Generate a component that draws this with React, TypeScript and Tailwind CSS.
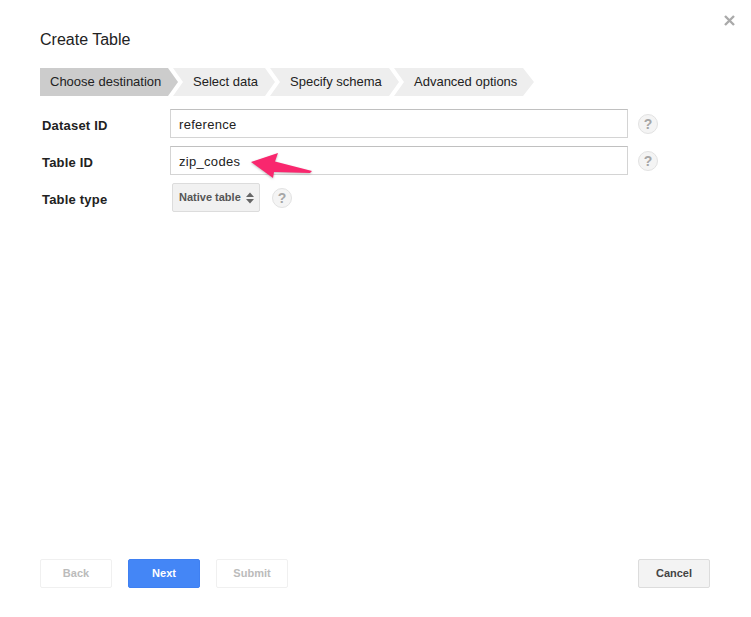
import React from 'react'

const steps = [
  { label: 'Choose destination', cls: 'w-[138px] bg-[#cccccc] pl-[10px] [clip-path:polygon(0_0,128px_0,100%_50%,128px_100%,0_100%)]' },
  { label: 'Select data', cls: 'ml-[-5px] w-[102px] bg-[#eeeeee] pl-[20px] [clip-path:polygon(0_0,92px_0,100%_50%,92px_100%,0_100%,10px_50%)]' },
  { label: 'Specify schema', cls: 'ml-[-5px] w-[129px] bg-[#eeeeee] pl-[20px] [clip-path:polygon(0_0,119px_0,100%_50%,119px_100%,0_100%,10px_50%)]' },
  { label: 'Advanced options', cls: 'ml-[-5px] w-[140px] bg-[#eeeeee] pl-[20px] [clip-path:polygon(0_0,129px_0,100%_50%,129px_100%,0_100%,10px_50%)]' },
]

function Help({ className = '' }: { className?: string }) {
  return (
    <span className={`flex h-5 w-5 shrink-0 items-center justify-center rounded-full border border-[#e2e2e2] bg-[#f4f4f4] text-[14px] font-bold leading-none text-[#a6a6a6] ${className}`}>
      ?
    </span>
  )
}

function Field({ label, value }: { label: string; value: string }) {
  return (
    <div className="flex items-center">
      <label className="w-[130px] pl-[2px] pt-1 text-[13px] font-bold tracking-[0.2px] text-[#222222]">{label}</label>
      <div className="flex h-[29px] w-[458px] items-center border border-[#d4d4d4] border-t-[#c0c0c0] bg-white pl-2 pt-[2px] text-[13px] tracking-[0.3px] text-[#222222]">
        {value}
      </div>
      <Help className="ml-[10px]" />
    </div>
  )
}

export default function App() {
  return (
    <div className="relative flex h-[617px] w-[751px] flex-col overflow-hidden bg-white px-10 font-['Liberation_Sans',Arial,sans-serif]">
      {/* Close */}
      <svg className="absolute left-[724px] top-[15px]" width="11" height="11" viewBox="0 0 11 11">
        <path d="M1 1L10 10M10 1L1 10" stroke="#aaaaaa" strokeWidth="2.4" fill="none" />
      </svg>

      <h1 className="mt-[30px] text-[16px] leading-[19px] text-[#222222]">Create Table</h1>

      {/* Wizard steps */}
      <div className="mt-[19px] flex">
        {steps.map((step) => (
          <div key={step.label} className={`flex h-[28px] items-center text-[13px] text-[#222222] ${step.cls}`}>
            {step.label}
          </div>
        ))}
      </div>

      {/* Form */}
      <div className="mt-[13px] flex flex-col gap-2">
        <Field label="Dataset ID" value="reference" />
        <Field label="Table ID" value="zip_codes" />
        <div className="flex items-center">
          <label className="w-[132px] pl-[2px] pt-1 text-[13px] font-bold tracking-[0.2px] text-[#222222]">Table type</label>
          <div className="flex h-[29px] w-[88px] items-center rounded-[2px] border border-[#dcdcdc] bg-[#f1f1f1] pl-[6px] text-[11px] font-bold text-[#555555]">
            Native table
            <svg className="ml-[5px]" width="8" height="14" viewBox="0 0 8 14">
              <path d="M4 1.5L8 6H0ZM4 12.5L0 8H8Z" fill="#666666" />
            </svg>
          </div>
          <Help className="ml-3" />
        </div>
      </div>

      {/* Annotation arrow */}
      <svg className="absolute left-[245px] top-[148px] drop-shadow-[0_1px_1px_rgba(0,0,0,0.25)]" width="72" height="34" viewBox="0 0 72 34">
        <path d="M6 14L33 5L30 13.5L67 23L65 25L29 24L28 30Z" fill="#f9276e" />
      </svg>

      {/* Footer buttons */}
      <div className="mt-auto mb-[29px] flex">
        <button className="h-[29px] w-[72px] rounded-[2px] border border-[#f0f0f0] bg-white text-[11px] font-bold text-[#bbbbbb]">Back</button>
        <button className="ml-4 h-[29px] w-[72px] rounded-[2px] border border-[#3f80f2] bg-[#4486f6] text-[11px] font-bold text-white">Next</button>
        <button className="ml-4 h-[29px] w-[72px] rounded-[2px] border border-[#f0f0f0] bg-white text-[11px] font-bold text-[#bbbbbb]">Submit</button>
        <button className="ml-auto mr-[1px] h-[29px] w-[72px] rounded-[2px] border border-[#dcdcdc] bg-[#f3f3f3] text-[11px] font-bold text-[#444444]">Cancel</button>
      </div>
    </div>
  )
}
